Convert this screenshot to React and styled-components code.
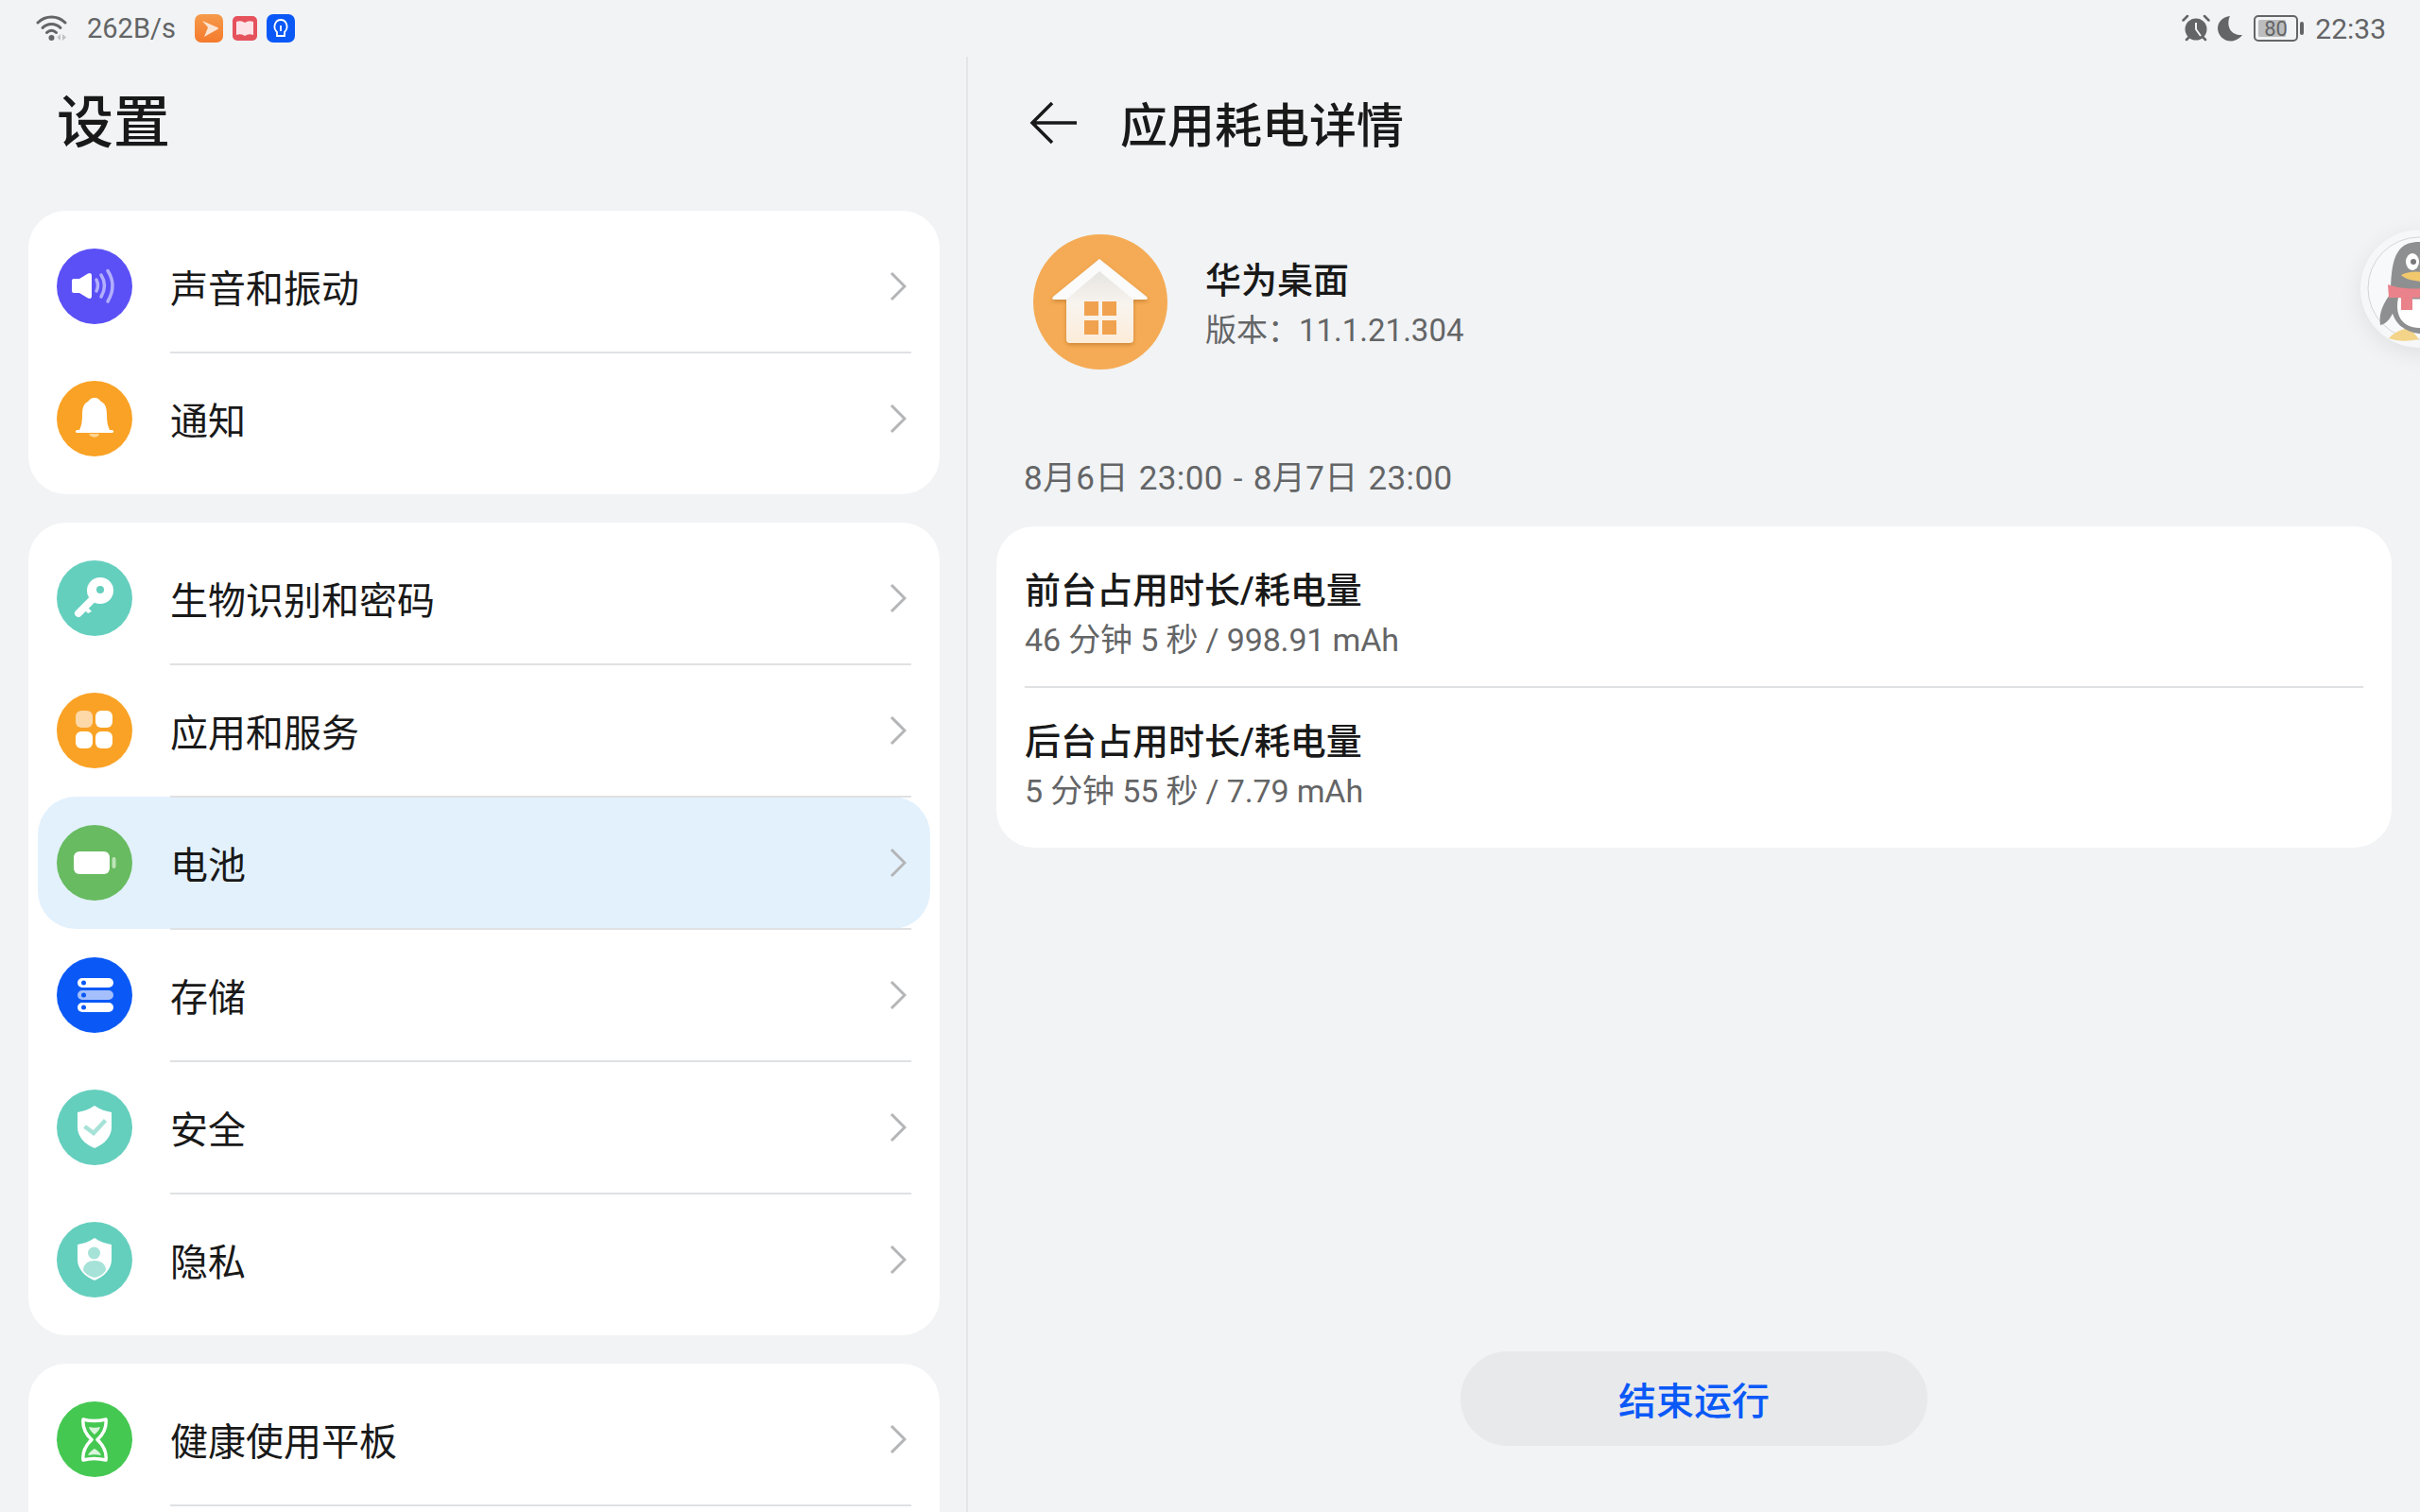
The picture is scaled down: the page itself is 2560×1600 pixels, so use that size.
import React from 'react';
import styled, { createGlobalStyle } from 'styled-components';

const GlobalStyle = createGlobalStyle`
  html, body {
    margin: 0;
    padding: 0;
    background: #f1f3f5;
    overflow: hidden;
    font-family: Roboto, "Noto Sans CJK SC", sans-serif;
  }
`;

const Screen = styled.div`
  position: relative;
  width: 2560px;
  height: 1600px;
  overflow: hidden;
  background: #f1f3f5;
  display: flex;
  flex-direction: column;
`;

const StatusBar = styled.div`
  height: 60px;
  flex: none;
  display: flex;
  align-items: center;
  justify-content: space-between;
  padding: 0 36px 0 38px;
  color: #646566;
  font-size: 29px;
`;

const StatusGroup = styled.div`
  display: flex;
  align-items: center;
`;

const Speed = styled.span`
  margin: 0 20px 0 20px;
`;

const Time = styled.span`
  font-size: 30px;
`;

const TinyApp = styled.svg`
  display: block;
  margin-right: ${p => p.$gap || 0}px;
`;

const Columns = styled.div`
  flex: 1;
  display: flex;
  min-height: 0;
`;

const LeftPane = styled.div`
  width: 1024px;
  box-sizing: border-box;
  flex: none;
  border-right: 2px solid #e4e5e7;
  overflow: hidden;
`;

const BigTitle = styled.h1`
  margin: 0;
  height: 163px;
  padding: 40px 0 0 60px;
  box-sizing: border-box;
  font-size: 60px;
  line-height: 62px;
  font-weight: 500;
  color: #191919;
`;

const Card = styled.div`
  width: 964px;
  margin: 0 0 30px 30px;
  padding: 10px 0 ${p => (p.$open ? 60 : 10)}px;
  box-sizing: border-box;
  background: #fff;
  border-radius: 40px;
`;

const Row = styled.div`
  height: 140px;
  margin: 0 10px;
  padding-left: 20px;
  display: flex;
  align-items: center;
  gap: 40px;
  border-radius: 40px;
  background: ${p => (p.$active ? '#e3f1fd' : 'transparent')};
`;

const Disc = styled.svg`
  display: block;
  flex: none;
  border-radius: 50%;
  background: ${p => p.$color};
`;

const RowBody = styled.div`
  flex: 1;
  height: 142px;
  box-sizing: border-box;
  margin-right: 20px;
  padding-right: 5px;
  display: flex;
  align-items: center;
  justify-content: space-between;
  border-bottom: 2px solid ${p => (p.$line ? '#e0e1e3' : 'transparent')};
`;

const RowLabel = styled.span`
  font-size: 40px;
  line-height: 50px;
  padding-top: 10px;
  color: #191919;
`;

const Chevron = styled.svg`
  display: block;
  flex: none;
  margin-top: 2px;
`;

const RightPane = styled.div`
  flex: 1;
  display: flex;
  flex-direction: column;
  min-width: 0;
`;

const DetailHeader = styled.div`
  height: 140px;
  flex: none;
  display: flex;
  align-items: center;
  gap: 44px;
  padding-left: 65px;
`;

const DetailTitle = styled.h2`
  margin: 0 0 3px;
  font-size: 50px;
  font-weight: 500;
  color: #191919;
`;

const AppInfo = styled.div`
  margin-top: 48px;
  padding-left: 69px;
  display: flex;
  align-items: center;
  gap: 40px;
`;

const AppName = styled.div`
  font-size: 38px;
  line-height: 52px;
  margin-top: 6px;
  font-weight: 500;
  color: #191919;
`;

const AppVersion = styled.div`
  font-size: 33px;
  line-height: 50px;
  margin-top: 2px;
  color: #646566;
`;

const DateRange = styled.div`
  margin: 91px 0 25px 59px;
  font-size: 35px;
  line-height: 50px;
  word-spacing: 2px;
  letter-spacing: 0.35px;
  color: #646566;
`;

const UsageCard = styled.div`
  margin: 0 30px;
  padding: 11px 30px 9px;
  background: #fff;
  border-radius: 40px;
`;

const UsageRow = styled.div`
  height: 160px;
  box-sizing: border-box;
  padding-top: 31px;
  border-bottom: 2px solid ${p => (p.$line ? '#e0e1e3' : 'transparent')};
`;

const UsageTitle = styled.div`
  font-size: 38px;
  line-height: 52px;
  font-weight: 500;
  color: #191919;
`;

const UsageValue = styled.div`
  font-size: 34px;
  line-height: 50px;
  margin-top: 1px;
  letter-spacing: -0.15px;
  color: #646566;
`;

const EndButton = styled.button`
  align-self: center;
  margin: auto 0 70px;
  width: 494px;
  height: 100px;
  border: 0;
  border-radius: 50px;
  background: #e8e9eb;
  color: #0a59f7;
  font-family: inherit;
  font-size: 40px;
  font-weight: 500;
`;

const FloatBall = styled.div`
  position: absolute;
  top: 243px;
  left: 2497px;
  width: 125px;
  height: 125px;
  border-radius: 50%;
  background: #f6f7f9;
  box-shadow: 0 6px 24px rgba(0, 0, 0, 0.08);
`;

const ChevronIcon = () => (
  <Chevron width="18" height="32" viewBox="0 0 18 32">
    <path d="M2 2 L16 16 L2 30" fill="none" stroke="#b4b5b7" strokeWidth="3" />
  </Chevron>
);

const shield = 'M40 17 C46 21 52 23 58 24 V40 C58 50 50 58 40 62 C30 58 22 50 22 40 V24 C28 23 34 21 40 17 Z';

const icons = {
  sound: (
    <>
      <path d="M18 32 H24 L33 26.5 Q37 25 37 29 V50 Q37 54 33 52.5 L24 47 H18 Q16 47 16 45 V34 Q16 32 18 32 Z" fill="#fff" />
      <g fill="none" stroke="#b3afff" strokeWidth="3.500" strokeLinecap="round">
        <path d="M42 33 Q45 39 42 45" />
        <path d="M47 28 Q54 39 47 51" />
        <path d="M54 23.5 Q64 39 54 56" />
      </g>
    </>
  ),
  bell: (
    <>
      <path d="M40 18 C44 18 45 20 47 22 C52 24 53 30 53 36 C53 43 54 48 56 52 H24 C26 48 27 43 27 36 C27 30 28 24 33 22 C35 20 36 18 40 18 Z" fill="#fff" />
      <rect x="20" y="52" width="40" height="3" rx="1.5" fill="#fff" />
      <path d="M34 56 H45 C44 61 36 61 34 56 Z" fill="#fcd391" />
    </>
  ),
  key: (
    <>
      <path d="M47 32 L23 56" stroke="#fff" strokeWidth="8" strokeLinecap="round" />
      <path d="M31 48 L37 54 L33 56 L29 52 Z" fill="#fff" />
      <circle cx="46" cy="32" r="14" fill="#fff" />
      <circle cx="46" cy="31" r="4" fill="#65cfbe" />
    </>
  ),
  apps: (
    <>
      <rect x="20" y="19" width="18" height="18" rx="6" fill="#fdd8a8" />
      <rect x="41" y="19" width="18" height="18" rx="6" fill="#fff" />
      <rect x="20" y="41" width="18" height="18" rx="6" fill="#fff" />
      <rect x="41" y="41" width="18" height="18" rx="6" fill="#fff" />
    </>
  ),
  battery: (
    <>
      <rect x="18" y="28" width="38" height="24" rx="6" fill="#fff" />
      <rect x="58.5" y="34" width="4" height="12" rx="2" fill="#bde5b8" />
    </>
  ),
  storage: (
    <>
      <rect x="22" y="22" width="38" height="10" rx="5" fill="#fff" />
      <rect x="22" y="35" width="38" height="10" rx="5" fill="#a4bffc" />
      <rect x="22" y="48" width="38" height="10" rx="5" fill="#fff" />
      <circle cx="28.500" cy="27" r="2.5" fill="#0a59f7" />
      <circle cx="28.500" cy="40" r="2.5" fill="#0a59f7" />
      <circle cx="28.500" cy="53" r="2.5" fill="#0a59f7" />
    </>
  ),
  security: (
    <>
      <path d={shield} fill="#fff" />
      <path d="M29.500 39 L39 46 L51.500 32.500" fill="none" stroke="#a6e2d8" strokeWidth="4.5" />
    </>
  ),
  privacy: (
    <>
      <path d={shield} fill="#fff" />
      <circle cx="39.500" cy="33" r="6.500" fill="#a6e2d8" />
      <path d="M28 51 C28 45 33 41 40 41 C47 41 52 45 52 51 C50 55 45 58 40 59 C35 58 30 55 28 51 Z" fill="#a6e2d8" />
    </>
  ),
  hourglass: (
    <>
      <path d="M28 19 C35 21 44 21 52 19 C53 28 50 34 43 40.500 C50 47 53 53 52 62 C44 60 35 60 28 62 C27 53 30 47 37 40.500 C30 34 27 28 28 19 Z" fill="none" stroke="#fff" strokeWidth="3.500" strokeLinejoin="round" />
      <path d="M34 27 C37 28 43 28 46 27 C45 31 42 33 40 35 C38 33 35 31 34 27 Z" fill="#d9f5dc" />
      <path d="M33 57 C35 53 38 51 40 50 C42 51 45 53 47 57 C43 56 37 56 33 57 Z" fill="#d9f5dc" />
    </>
  ),
};

const IconDisc = ({ name, color }) => (
  <Disc $color={color} width="80" height="80" viewBox="0 0 80 80">
    {icons[name]}
  </Disc>
);

// the last card runs off the bottom of the screen, only its first row shows
const menu = [
  {
    items: [
      { label: '声音和振动', icon: 'sound', color: '#5b50f6', line: true },
      { label: '通知', icon: 'bell', color: '#f9a225' },
    ],
  },
  {
    items: [
      { label: '生物识别和密码', icon: 'key', color: '#65cfbe', line: true },
      { label: '应用和服务', icon: 'apps', color: '#f9a225', line: true },
      { label: '电池', icon: 'battery', color: '#68bb61', active: true, line: true },
      { label: '存储', icon: 'storage', color: '#0a59f7', line: true },
      { label: '安全', icon: 'security', color: '#65cfbe', line: true },
      { label: '隐私', icon: 'privacy', color: '#65cfbe' },
    ],
  },
  {
    open: true,
    items: [{ label: '健康使用平板', icon: 'hourglass', color: '#45c852', line: true }],
  },
];

const WifiIcon = () => (
  <svg width="34" height="30" viewBox="0 0 34 30" style={{ display: 'block' }}>
    <g fill="none" stroke="#646566" strokeWidth="3" strokeLinecap="round">
      <path d="M2 9 C10 1 23 1 31 9" />
      <path d="M7 14.500 C12 9 21 9 26 14.500" />
      <path d="M11.500 19.500 C14.500 16.500 18.500 16.500 21.500 19.500" />
    </g>
    <circle cx="16.500" cy="25" r="3" fill="#646566" />
    <path d="M26 21 V28 L22.500 24.500 Z M28 21 V28 L32 24.500 Z" fill="#c0c1c3" />
  </svg>
);

const AlarmIcon = () => (
  <svg width="30" height="30" viewBox="0 0 30 30" style={{ display: 'block', marginRight: 8 }}>
    <circle cx="15" cy="16" r="11.500" fill="#646566" />
    <path d="M15 9 V16 L20 23" fill="none" stroke="#f1f3f5" strokeWidth="2" />
    <path d="M1.500 6.500 L6 2 M28.500 6.500 L24 2 M5 27 L7.500 24.500 M25 27 L22.500 24.500" stroke="#646566" strokeWidth="2.500" strokeLinecap="round" />
  </svg>
);

const MoonIcon = () => (
  <svg width="27" height="28" viewBox="0 0 27 28" style={{ display: 'block', marginRight: 11 }}>
    <path d="M13 1 C9 9 12 22 26 21 C23 25 18 27.500 14 27.500 C6 27.500 0 21 0 14 C0 7 6 1.500 13 1 Z" fill="#646566" />
  </svg>
);

const BatteryIcon = () => (
  <svg width="54" height="28" viewBox="0 0 54 28" style={{ display: 'block', marginRight: 11 }}>
    <rect x="1" y="1" width="45" height="26" rx="4" fill="none" stroke="#646566" strokeWidth="2" />
    <rect x="5" y="5" width="29" height="18" rx="1.500" fill="#bcbdbe" />
    <rect x="49" y="7" width="4" height="14" rx="2" fill="#646566" />
    <text x="23.500" y="22" textAnchor="middle" fontSize="22" fontFamily="Roboto, sans-serif" fill="#646566">80</text>
  </svg>
);

const HouseIcon = () => (
  <svg width="142" height="143" viewBox="0 0 142 143" style={{ display: 'block', flex: 'none' }}>
    <defs>
      <linearGradient id="wall" x1="0" y1="0" x2="0" y2="1">
        <stop offset="0" stopColor="#e4e3e1" />
        <stop offset="0.5" stopColor="#f8f4ee" />
        <stop offset="1" stopColor="#fdecd9" />
      </linearGradient>
      <filter id="soft" x="-20%" y="-20%" width="140%" height="140%">
        <feDropShadow dx="0" dy="2" stdDeviation="2" floodColor="#a8661f" floodOpacity="0.55" />
      </filter>
    </defs>
    <ellipse cx="71" cy="71.500" rx="71" ry="71.500" fill="#f5ab55" />
    <g filter="url(#soft)">
      <path d="M35 60 L70 35 L106 60 V111 Q106 115 102 115 H39 Q35 115 35 111 Z" fill="url(#wall)" />
      <path d="M70 26 L120 66 Q122 69 119 69 H106 L70 39 L35 69 H22 Q19 69 21 66 Z" fill="#fbfbfb" />
    </g>
    <rect x="54" y="71" width="15" height="15" fill="#f0a24e" />
    <rect x="73" y="71" width="15" height="15" fill="#f0a24e" />
    <rect x="54" y="91" width="15" height="15" fill="#f0a24e" />
    <rect x="73" y="91" width="15" height="15" fill="#f0a24e" />
  </svg>
);

const Penguin = () => (
  <svg width="125" height="125" viewBox="0 0 125 125" style={{ display: 'block' }}>
    <circle cx="62" cy="62" r="54" fill="#f8f9fb" stroke="#d4d5d7" strokeWidth="1" />
    <path d="M30 115 Q38 106 52 104 L62 116 Q44 120 30 115 Z" fill="#f3d488" />
    <path d="M32 70 C32 30 38 13 62 13 C86 13 92 30 92 70 C96 90 88 108 62 110 C40 108 30 90 32 70 Z" fill="#8e8f90" />
    <path d="M40 72 C52 74 72 74 90 72 C94 90 84 104 62 104 C44 104 36 90 40 72 Z" fill="#fff" />
    <path d="M33 66 C24 78 19 88 21 101 C28 100 33 92 36 84 Z" fill="#8e8f90" />
    <ellipse cx="55" cy="34" rx="7" ry="9" fill="#fff" />
    <circle cx="56" cy="34" r="3" fill="#77787a" />
    <path d="M43 48 Q52 43 66 45 L90 48 Q72 57 58 54 Q48 53 43 48 Z" fill="#f2c86c" />
    <path d="M29 58 C44 64 70 64 92 58 V72 H55 V85 H43 V72 H30 Z" fill="#ea828b" />
  </svg>
);

const BackArrow = () => (
  <svg width="52" height="46" viewBox="0 0 52 46" style={{ display: 'block', flex: 'none' }}>
    <path d="M24 2 L3 23 L24 44 M3 23 H50" fill="none" stroke="#191919" strokeWidth="3.500" />
  </svg>
);

const App = () => (
  <Screen>
    <GlobalStyle />
    <StatusBar>
      <StatusGroup>
        <WifiIcon />
        <Speed>262B/s</Speed>
        <TinyApp $gap={10} width="30" height="30" viewBox="0 0 30 30">
          <defs>
            <linearGradient id="video" x1="0" y1="0" x2="0" y2="1">
              <stop offset="0" stopColor="#f59a4a" />
              <stop offset="1" stopColor="#f57a2c" />
            </linearGradient>
          </defs>
          <rect width="30" height="30" rx="7" fill="url(#video)" />
          <path d="M8 7 L24 14 Q26 15 24 16 L10 24 L14 14 Z" fill="#fde4d2" />
        </TinyApp>
        <TinyApp $gap={10} width="26" height="26" viewBox="0 0 26 26">
          <rect width="26" height="26" rx="5" fill="#e5525c" />
          <path d="M4 6 Q9 4 13 7 Q17 4 22 6 V20 Q17 18 13 21 Q9 18 4 20 Z" fill="#fde3e8" />
        </TinyApp>
        <TinyApp width="30" height="30" viewBox="0 0 30 30">
          <rect width="30" height="30" rx="7" fill="#0a59f7" />
          <path d="M11 19 C6 14 9 6 15 6 C21 6 24 14 19 19 V23 H11 Z" fill="none" stroke="#fff" strokeWidth="1.800" />
          <path d="M15 12 V18" stroke="#fff" strokeWidth="1.800" />
        </TinyApp>
      </StatusGroup>
      <StatusGroup>
        <AlarmIcon />
        <MoonIcon />
        <BatteryIcon />
        <Time>22:33</Time>
      </StatusGroup>
    </StatusBar>
    <Columns>
      <LeftPane>
        <BigTitle>设置</BigTitle>
        {menu.map((group, i) => (
          <Card key={i} $open={group.open}>
            {group.items.map(item => (
              <Row key={item.label} $active={item.active}>
                <IconDisc name={item.icon} color={item.color} />
                <RowBody $line={item.line}>
                  <RowLabel>{item.label}</RowLabel>
                  <ChevronIcon />
                </RowBody>
              </Row>
            ))}
          </Card>
        ))}
      </LeftPane>
      <RightPane>
        <DetailHeader>
          <BackArrow />
          <DetailTitle>应用耗电详情</DetailTitle>
        </DetailHeader>
        <AppInfo>
          <HouseIcon />
          <div>
            <AppName>华为桌面</AppName>
            <AppVersion>版本：11.1.21.304</AppVersion>
          </div>
        </AppInfo>
        <DateRange>8月6日 23:00 - 8月7日 23:00</DateRange>
        <UsageCard>
          <UsageRow $line>
            <UsageTitle>前台占用时长/耗电量</UsageTitle>
            <UsageValue>46 分钟 5 秒 / 998.91 mAh</UsageValue>
          </UsageRow>
          <UsageRow>
            <UsageTitle>后台占用时长/耗电量</UsageTitle>
            <UsageValue>5 分钟 55 秒 / 7.79 mAh</UsageValue>
          </UsageRow>
        </UsageCard>
        <EndButton>结束运行</EndButton>
      </RightPane>
    </Columns>
    <FloatBall>
      <Penguin />
    </FloatBall>
  </Screen>
);

export default App;
